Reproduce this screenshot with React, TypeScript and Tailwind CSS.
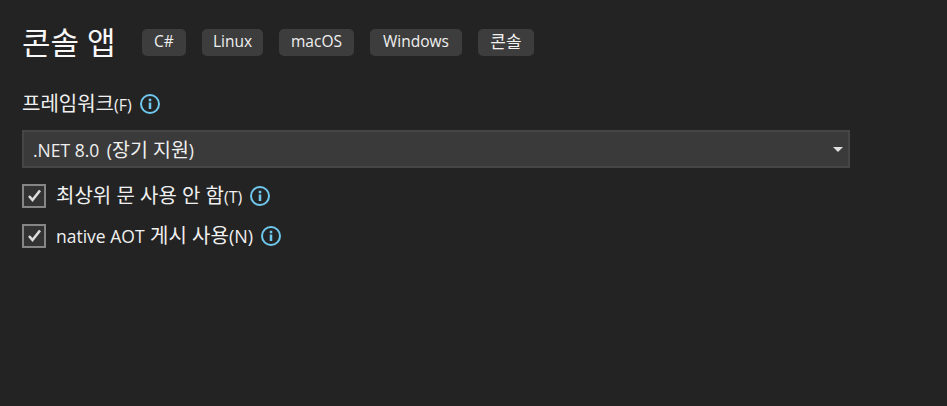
function InfoIcon() {
  return (
    <svg width="20" height="20" viewBox="0 0 20 20" fill="none" className="shrink-0">
      <circle cx="10" cy="10" r="9" stroke="#6fc8ee" strokeWidth="2" />
      <rect x="8.75" y="8.5" width="2.5" height="6.5" fill="#6fc8ee" />
      <rect x="8.75" y="4.75" width="2.5" height="2.5" fill="#6fc8ee" />
    </svg>
  );
}

function Tag({ label, width }: { label: string; width: string }) {
  return (
    <span className={`h-[27px] flex items-center justify-center rounded-[5px] bg-[#3d3d3d] text-[15.5px] text-[#f0f0f0] ${width}`}>
      {label}
    </span>
  );
}

function CheckBox() {
  return (
    <span className="w-[24px] h-[24px] flex items-center justify-center border-2 border-[#858585] bg-[#333333]">
      <svg width="20" height="20" viewBox="0 0 20 20" fill="none">
        <path d="M5 10 L8.5 14 L16 4.5" stroke="#dcdcdc" strokeWidth="2.6" />
      </svg>
    </span>
  );
}

export default function App() {
  return (
    <div className="w-[947px] h-[406px] bg-[#232323] pl-[22px] pt-[24px] font-['Open_Sans','Noto_Sans_CJK_KR',sans-serif]">
      <div className="flex items-center h-[36px]">
        <h1 className="text-[31px] font-normal text-[#f8f8f8] w-[120px]">콘솔 앱</h1>
        <div className="flex gap-4">
          <Tag label="C#" width="w-[44px]" />
          <Tag label="Linux" width="w-[61px]" />
          <Tag label="macOS" width="w-[75px]" />
          <Tag label="Windows" width="w-[92px]" />
          <span className="h-[27px] w-[56px] flex items-center justify-center rounded-[5px] bg-[#3d3d3d] text-[17px] text-[#f0f0f0]">
            콘솔
          </span>
        </div>
      </div>
      <div className="flex items-center gap-2 mt-[32px] h-[24px] text-[20px] text-[#f0f0f0]">
        <span className="whitespace-pre">
          프레임워크<span className="text-[16px]">(F)</span>
        </span>
        <InfoIcon />
      </div>
      <div className="mt-[14px] w-[828px] h-[38px] flex items-center justify-between pl-[9px] pr-[5px] border-2 border-[#464646] bg-[#3a3a3a] text-[#f0f0f0]">
        <span className="text-[17.5px] whitespace-pre pt-[1px]">
          .NET 8.0 <span className="ml-[3px]">(</span>
          <span className="text-[19.5px]">장기 지원</span>)
        </span>
        <span className="w-0 h-0 border-l-[5px] border-r-[5px] border-t-[5px] border-l-transparent border-r-transparent border-t-[#e0e0e0]" />
      </div>
      <div className="flex flex-col gap-4 mt-4">
        <div className="flex items-center h-[24px]">
          <CheckBox />
          <span className="ml-[10px] text-[20px] text-[#f0f0f0] whitespace-pre">
            최상위 문 사용 안 함<span className="text-[16px]">(T)</span>
          </span>
          <span className="ml-[8px]">
            <InfoIcon />
          </span>
        </div>
        <div className="flex items-center h-[24px]">
          <CheckBox />
          <span className="ml-[10px] text-[17.5px] text-[#f0f0f0] whitespace-pre">
            native AOT <span className="text-[20px] ml-[1px]">게시 사용</span>
            <span className="text-[18px]">(N)</span>
          </span>
          <span className="ml-[8px]">
            <InfoIcon />
          </span>
        </div>
      </div>
    </div>
  );
}
